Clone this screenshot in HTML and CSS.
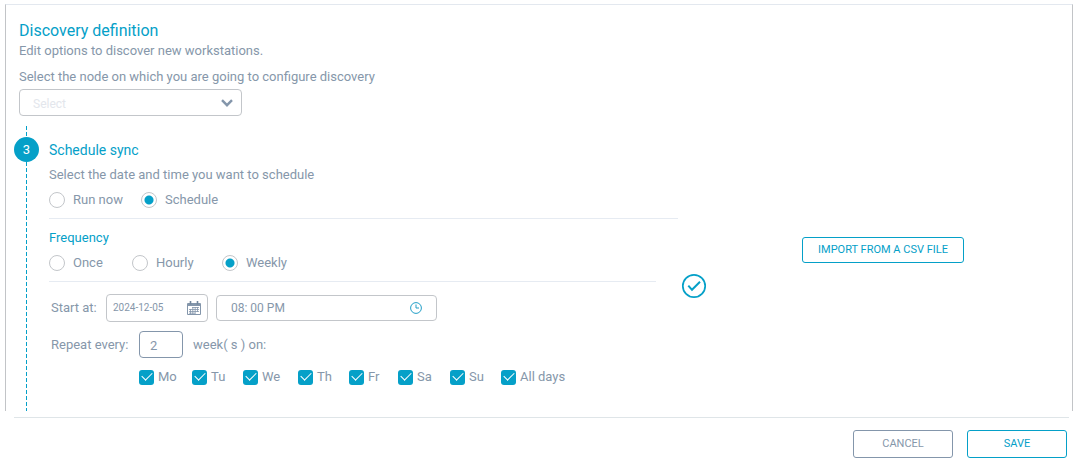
FILE: index.html
```html
<!DOCTYPE html>
<html lang="en">
  <head>
    <meta charset="utf-8">
    <title>Discovery definition</title>
    <link rel="stylesheet" href="styles.css">
  </head>
  <body>
    <main class="panel">
      <h1>Discovery definition</h1>
      <p>Edit options to discover new workstations.</p>
      <label class="node-label" for="node">Select the node on which you are going to configure discovery</label>
      <div class="node-select">
        <select id="node">
          <option>Select</option>
        </select>
        <svg class="chevron" viewBox="0 0 12 8" aria-hidden="true">
          <path d="M1 1.2 6 6.2 11 1.2" fill="none" stroke="#8496ab" stroke-width="2.4"/>
        </svg>
      </div>

      <section class="step">
        <div class="rail"><span class="step-number">3</span></div>
        <form class="schedule" id="schedule">
          <h2>Schedule sync</h2>
          <p class="hint">Select the date and time you want to schedule</p>
          <div class="radios run-options">
            <label><input type="radio" name="run"> Run now</label>
            <label><input type="radio" name="run" checked> Schedule</label>
          </div>

          <div class="frequency">
            <h3>Frequency</h3>
            <div class="radios frequency-options">
              <label><input type="radio" name="frequency"> Once</label>
              <label><input type="radio" name="frequency"> Hourly</label>
              <label><input type="radio" name="frequency" checked> Weekly</label>
            </div>
          </div>

          <div class="row start-row">
            <label for="date">Start at:</label>
            <div class="field date-field">
              <input type="text" id="date" value="2024-12-05">
              <svg viewBox="0 0 14 14" width="14" height="14" aria-hidden="true">
                <path d="M.5 2.5h13v11H.5z" fill="#fff" stroke="#8496ab"/>
                <path d="M1 2h12v3H1z" fill="#8496ab"/>
                <path d="M3.5 0v3.5M10.5 0v3.5" stroke="#71859c" stroke-width="1.6"/>
                <path d="M5 6.5h7M2 8.5h10M2 10.5h10M2 12.2h6M3.5 8v5M5.8 6v7M8.2 6v7M10.5 6v5" stroke="#8496ab" stroke-width=".8"/>
              </svg>
            </div>
            <div class="field time-field">
              <input type="text" aria-label="Start time" value="08: 00 PM">
              <svg viewBox="0 0 12 12" width="12" height="12" aria-hidden="true">
                <g fill="none" stroke="#239fc7">
                  <circle cx="6" cy="6" r="5.4"/>
                  <path d="M6 2.5V6h3"/>
                </g>
              </svg>
            </div>
          </div>

          <div class="row repeat-row">
            <label for="weeks">Repeat every:</label>
            <input type="text" id="weeks" class="weeks" value="2">
            <span>week( s ) on:</span>
          </div>

          <div class="days">
            <label><input type="checkbox" checked> Mo</label>
            <label><input type="checkbox" checked> Tu</label>
            <label><input type="checkbox" checked> We</label>
            <label><input type="checkbox" checked> Th</label>
            <label><input type="checkbox" checked> Fr</label>
            <label><input type="checkbox" checked> Sa</label>
            <label><input type="checkbox" checked> Su</label>
            <label><input type="checkbox" checked> All days</label>
          </div>
        </form>

        <svg class="done" viewBox="0 0 26 26" aria-hidden="true">
          <g fill="none" stroke="#05a0c8">
            <circle cx="13" cy="13" r="11.2" stroke-width="1.7"/>
            <path d="M7.3 12.6 11 16.8 19 8.8" stroke-width="2"/>
          </g>
        </svg>

        <div class="import">
          <button type="button">IMPORT FROM A CSV FILE</button>
        </div>
      </section>
    </main>

    <footer>
      <button type="button" class="cancel">CANCEL</button>
      <button type="submit" form="schedule">SAVE</button>
    </footer>
  </body>
</html>
```

FILE: styles.css
```css
* {
  box-sizing: border-box;
}

body {
  margin: 0;
  background-color: #fff;
  color: #8697aa;
  font-family: Roboto, Arial, sans-serif;
  font-size: 13px;
  line-height: 20px;
}

h1, h2, h3, p {
  margin: 0;
  font-weight: 400;
}

h1, h2, h3 {
  color: #05a0c8;
}

h1 {
  font-size: 16px;
  line-height: 20px;
}

h2 {
  font-size: 14px;
}

h3 {
  font-size: 13px;
}

input, select, button {
  font: inherit;
  color: inherit;
  background-color: #fff;
}

.panel {
  margin: 4px 6px 0 5px;
  padding: 16px 13px 0;
  border: 1px solid #c2c4c7;
  border-top-color: #e3e8ef;
  border-bottom: none;
}

/* node selector */
.node-label {
  display: block;
  margin-top: 6px;
}

.node-select {
  position: relative;
  width: 223px;
  height: 27px;
  margin-top: 2px;
}

.node-select select {
  width: 100%;
  height: 100%;
  padding: 2px 13px 0;
  border: 1px solid #c3c6ca;
  border-radius: 4px;
  appearance: none;
  color: #e3e6ec;
  font-size: 12px;
}

.chevron {
  position: absolute;
  top: 10px;
  right: 9px;
  width: 12px;
  height: 8px;
}

/* step with the dashed line on its left */
.step {
  display: flex;
  margin: 10px 0 0 -5px;
}

.rail {
  flex: none;
  width: 35px;
  padding-top: 11px;
  background: repeating-linear-gradient(#05a0c8 0 4px, transparent 4px 6px) 12px 0 / 1px 100% no-repeat;
}

.step-number {
  display: block;
  width: 25px;
  height: 25px;
  border-radius: 50%;
  background-color: #05a0c8;
  color: #fff;
  line-height: 26px;
  text-align: center;
}

.schedule {
  flex: 0 0 629px;
  padding: 14px 0 24px;
}

.hint {
  margin-top: 5px;
}

.radios {
  display: grid;
  padding-bottom: 8px;
  border-bottom: 1px solid #e6ebf2;
}

.radios label, .days label {
  display: flex;
  align-items: center;
  white-space: nowrap;
}

.radios label {
  gap: 8px;
}

.radios input {
  width: 16px;
  height: 16px;
  margin: 0;
  border: 1px solid #c3c6ca;
  border-radius: 50%;
  appearance: none;
}

.radios input:checked {
  background: radial-gradient(circle, #05a0c8 4px, #fff 5px);
}

.run-options {
  grid-template-columns: 92px auto;
  margin-top: 5px;
}

.frequency {
  margin: 9px 22px 0 0;
}

.frequency-options {
  grid-template-columns: 83px 90px auto;
  margin-top: 5px;
}

.row {
  display: flex;
  align-items: center;
  padding-left: 2px;
}

.start-row {
  gap: 8px;
  margin-top: 12px;
}

.start-row label {
  width: 47px;
  white-space: nowrap;
}

.field {
  display: flex;
  align-items: center;
  border: 1px solid #c3c6ca;
  border-radius: 4px;
}

.field input {
  flex: 1;
  min-width: 0;
  padding: 0;
  border: none;
}

.date-field {
  width: 102px;
  height: 28px;
  padding: 0 6px;
  font-size: 10px;
}

.time-field {
  width: 221px;
  height: 26px;
  padding: 0 14px;
  font-size: 12px;
}

.repeat-row {
  gap: 10px;
  margin-top: 9px;
}

.repeat-row label {
  width: 78px;
  white-space: nowrap;
}

.weeks {
  width: 44px;
  height: 27px;
  padding: 2px 10px 0;
  border: 1px solid #8496ab;
  border-radius: 4px;
}

.days {
  display: grid;
  grid-template-columns: 53px 51px 55px 51px 49px 52px 51px auto;
  margin: 9px 0 0 90px;
}

.days label {
  gap: 4px;
}

.days input {
  display: grid;
  place-items: center;
  width: 15px;
  height: 15px;
  margin: 0;
  border-radius: 3px;
  appearance: none;
}

.days input:checked {
  background-color: #05a0c8;
}

.days input:checked::after {
  content: "";
  width: 9px;
  height: 5px;
  margin-bottom: 4px;
  border: solid #fff;
  border-width: 0 0 1px 1px;
  transform: rotate(-45deg);
}

.done {
  flex: none;
  width: 26px;
  height: 26px;
  margin: 147px 0 0 3px;
}

.import {
  flex: 1;
  padding: 111px 0 0;
  text-align: center;
}

button {
  height: 28px;
  padding: 0 15px;
  border: 1px solid #05a0c8;
  border-radius: 3px;
  color: #05a0c8;
  font-size: 11px;
  cursor: pointer;
}

.import button {
  height: 26px;
}

/* bottom actions */
footer {
  display: flex;
  justify-content: flex-end;
  gap: 14px;
  margin: 6px 10px 0 14px;
  padding: 12px 2px 0 0;
  border-top: 1px solid #dfe5e8;
}

footer button {
  width: 100px;
}

footer .cancel {
  border-color: #8496ab;
  color: #8697aa;
}
```
